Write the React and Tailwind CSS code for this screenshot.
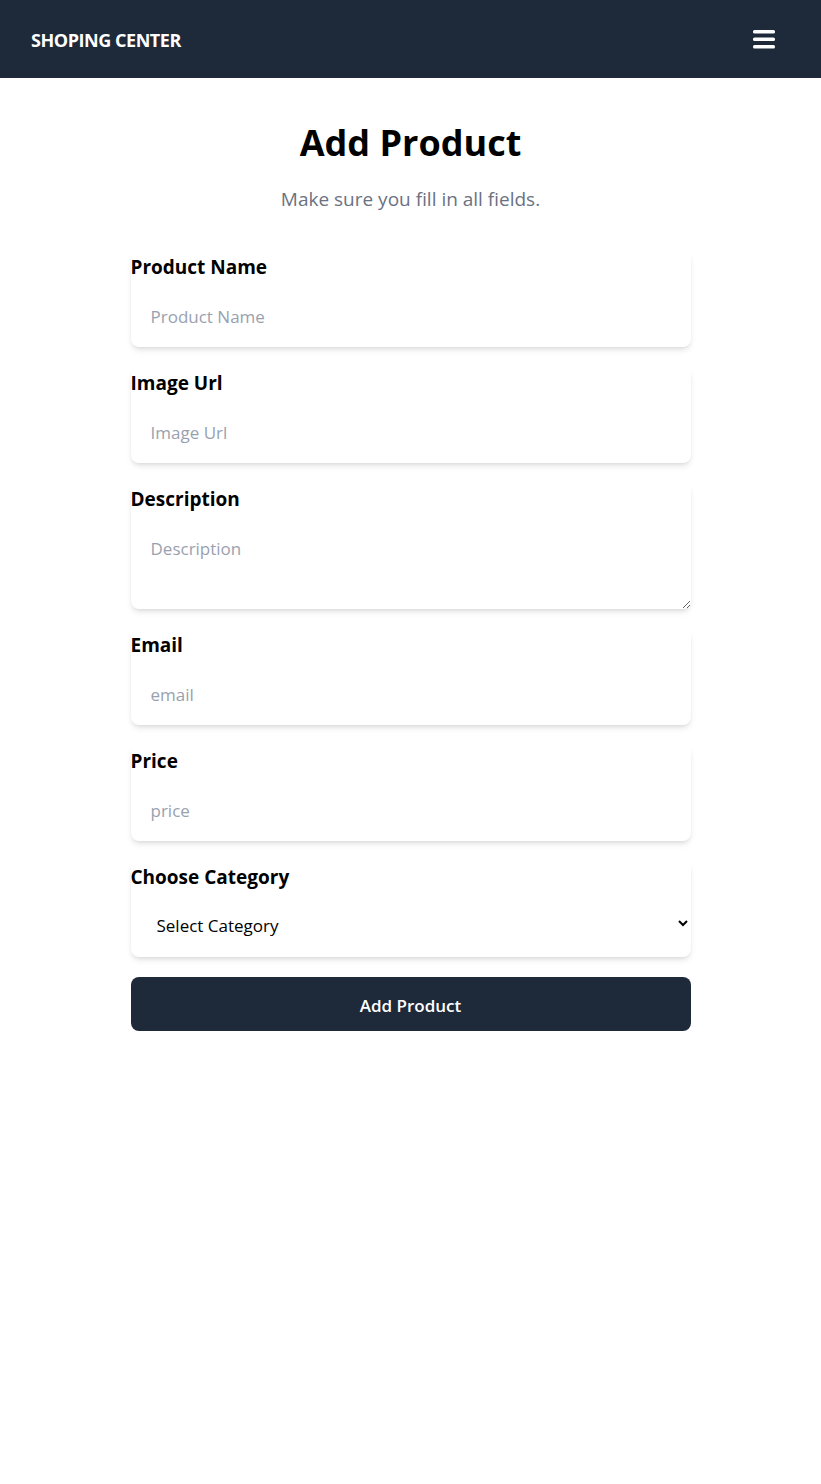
import React from "react";

function Navbar() {
  return (
    <nav className="bg-gray-800 h-[78px] flex items-center justify-between pl-[31px] pr-[46px]">
      <span className="text-white font-bold text-[18px] tracking-tight pt-[2px]">SHOPING CENTER</span>
      <button className="text-white" aria-label="menu">
        <svg width="22" height="20" viewBox="0 0 22 20" fill="currentColor">
          <rect x="0" y="1" width="22" height="3.5" rx="1.5" />
          <rect x="0" y="8.5" width="22" height="3.5" rx="1.5" />
          <rect x="0" y="16" width="22" height="3.5" rx="1.5" />
        </svg>
      </button>
    </nav>
  );
}

function Field({ label, children }) {
  return (
    <div className="bg-white rounded-lg shadow-md mb-5">
      <label className="block font-bold text-[19px] pt-1 leading-6 text-black">{label}</label>
      {children}
    </div>
  );
}

export default function App() {
  const inputCls =
    "w-full px-5 pt-6 pb-4 text-[17px] leading-7 bg-transparent outline-none placeholder:text-gray-400 rounded-lg";
  return (
    <div className="min-h-[1484px] bg-white" style={{ fontFamily: '"Open Sans", "Noto Sans", sans-serif' }}>
      <Navbar />
      <main className="w-[560px] mx-auto pt-[45px]">
        <h1 className="text-4xl leading-10 font-bold text-center text-black">Add Product</h1>
        <p className="mt-[22px] mb-[38px] text-[19px] leading-7 text-center text-gray-500">
          Make sure you fill in all fields.
        </p>
        <form>
          <Field label="Product Name">
            <input className={inputCls} placeholder="Product Name" />
          </Field>
          <Field label="Image Url">
            <input className={inputCls} placeholder="Image Url" />
          </Field>
          <Field label="Description">
            <textarea className={inputCls + " h-[98px] block"} placeholder="Description" />
          </Field>
          <Field label="Email">
            <input className={inputCls} placeholder="email" />
          </Field>
          <Field label="Price">
            <input className={inputCls} placeholder="price" />
          </Field>
          <Field label="Choose Category">
            <select className="w-full h-[68px] pl-[22px] pr-1 pt-1 text-[17px] bg-transparent outline-none text-black rounded-lg">
              <option>Select Category</option>
            </select>
          </Field>
          <button
            type="button"
            className="w-full h-[54px] bg-gray-800 text-white font-semibold text-[17px] rounded-lg pt-[3px]"
          >
            Add Product
          </button>
        </form>
      </main>
    </div>
  );
}
